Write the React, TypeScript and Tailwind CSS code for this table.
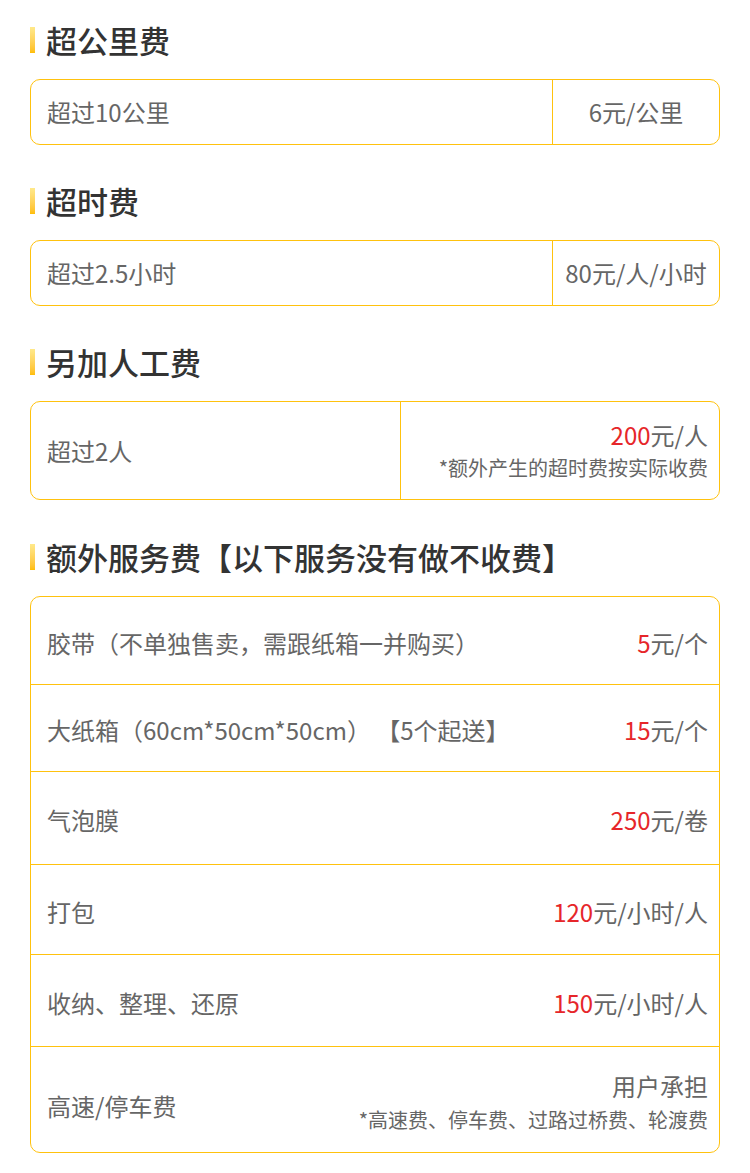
import React from "react";

const font = { fontFamily: '"Noto Sans CJK SC", "Noto Sans", sans-serif' };

const SectionTitle = ({ title }: { title: string }) => (
  <div className="flex items-center h-[40px] mb-[19px]">
    <span className="w-[5px] h-[26px] mr-[11px] bg-gradient-to-b from-[#ffe98a] to-[#ffbe00]" />
    <h2 className="text-[31px] leading-[40px] text-[#333] font-medium">{title}</h2>
  </div>
);

const Price = ({ num, unit }: { num: string; unit: string }) => (
  <span>
    <span className="text-[#e6262a]">{num}</span>
    {unit}
  </span>
);

const extras = [
  { name: "胶带（不单独售卖，需跟纸箱一并购买）", num: "5", unit: "元/个", h: "h-[88px]" },
  { name: "大纸箱（60cm*50cm*50cm） 【5个起送】", num: "15", unit: "元/个", h: "h-[87px]" },
  { name: "气泡膜", num: "250", unit: "元/卷", h: "h-[93px]" },
  { name: "打包", num: "120", unit: "元/小时/人", h: "h-[90px]" },
  { name: "收纳、整理、还原", num: "150", unit: "元/小时/人", h: "h-[92px]" },
];

const App = () => {
  return (
    <div style={font} className="w-[750px] bg-white px-[30px] pt-[20px] pb-[21px] text-[#666]">
      <SectionTitle title="超公里费" />
      <div className="flex h-[66px] border border-[#ffc20e] rounded-[10px] text-[24px]">
        <div className="flex-1 flex items-center pl-[16px]">超过10公里</div>
        <div className="w-[167px] flex items-center justify-center border-l border-[#ffc20e]">6元/公里</div>
      </div>

      <div className="mt-[36px]">
        <SectionTitle title="超时费" />
      </div>
      <div className="flex h-[66px] border border-[#ffc20e] rounded-[10px] text-[24px]">
        <div className="flex-1 flex items-center pl-[16px]">超过2.5小时</div>
        <div className="w-[167px] flex items-center justify-center border-l border-[#ffc20e]">80元/人/小时</div>
      </div>

      <div className="mt-[36px]">
        <SectionTitle title="另加人工费" />
      </div>
      <div className="flex h-[99px] border border-[#ffc20e] rounded-[10px] text-[24px]">
        <div className="w-[369px] flex items-center pl-[16px]">超过2人</div>
        <div className="flex-1 flex flex-col items-end justify-center pr-[11px] border-l border-[#ffc20e]">
          <div className="leading-[34px]">
            <Price num="200" unit="元/人" />
          </div>
          <div className="text-[20px] leading-[32px]">*额外产生的超时费按实际收费</div>
        </div>
      </div>

      <div className="mt-[37px]">
        <SectionTitle title="额外服务费【以下服务没有做不收费】" />
      </div>
      <div className="border border-[#ffc20e] rounded-[10px] text-[24px]">
        {extras.map((item) => (
          <div
            key={item.name}
            className={`${item.h} flex items-center justify-between pl-[16px] pr-[11px] pt-[4px] border-b border-[#ffc20e]`}
          >
            <span>{item.name}</span>
            <Price num={item.num} unit={item.unit} />
          </div>
        ))}
        <div className="h-[105px] flex items-center justify-between pl-[16px] pr-[11px] pt-[6px]">
          <span className="pt-[6px]">高速/停车费</span>
          <div className="flex flex-col items-end">
            <span className="leading-[34px]">用户承担</span>
            <span className="text-[20px] leading-[34px]">*高速费、停车费、过路过桥费、轮渡费</span>
          </div>
        </div>
      </div>
    </div>
  );
};

export default App;
